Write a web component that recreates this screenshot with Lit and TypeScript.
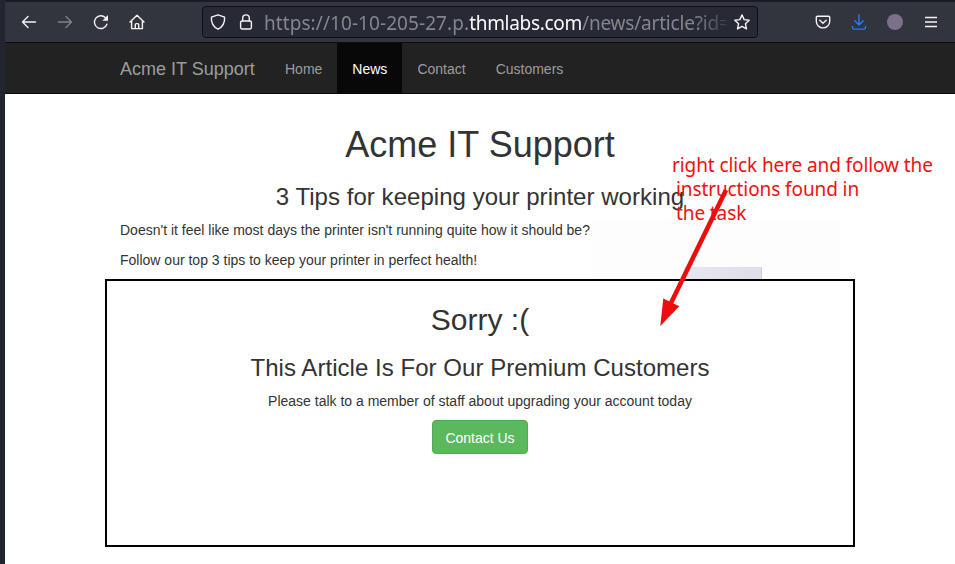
import { LitElement, html, css, svg } from "lit";
import { customElement } from "lit/decorators.js";
import { classMap } from "lit/directives/class-map.js";

@customElement("browser-toolbar")
class BrowserToolbar extends LitElement {
  static styles = css`
    :host { display: flex; align-items: center; height: 43px; box-sizing: border-box;
      background: #33353e; border-top: 2px solid #1a1b24; border-bottom: 1px solid #0c0c11;
      padding: 0 16px; color: #f3f3f5; }
    svg { display: block; width: 16px; height: 16px; fill: none; stroke: currentColor;
      stroke-width: 1.4; stroke-linecap: round; stroke-linejoin: round; flex: none; }
    .nav { display: flex; gap: 20px; width: 181px; flex: none; }
    .dim { color: #808188; }
    .bar { display: flex; align-items: center; width: 556px; height: 32px; box-sizing: border-box; flex: none;
      background: #272934; border: 1px solid #0e0f16; border-radius: 4px; padding: 0 7px; }
    .bar svg + svg { margin-left: 12px; }
    .url { flex: none; width: 463px; margin: 1px 7px 0 10px; white-space: nowrap;
      font: 19px/30px "Noto Sans", sans-serif; color: #85868b; letter-spacing: 0.07px;
      -webkit-mask-image: linear-gradient(to right, #000 430px, transparent 470px);
      mask-image: linear-gradient(to right, #000 430px, transparent 470px); }
    .host { color: #fbfbfe; letter-spacing: -0.3px; }
    .path { letter-spacing: -0.2px; }
    .tools { display: flex; align-items: center; gap: 20px; margin-left: 57px; }
    .blue { color: #2579ff; }
    .avatar { width: 16px; height: 16px; border-radius: 50%; background: #7c718b; flex: none; }
  `;
  render() {
    return html`
      <div class="nav">
        <svg viewBox="0 0 16 16"><path d="M14.5 8H1.5M7 2.5 1.5 8 7 13.5" /></svg>
        <svg class="dim" viewBox="0 0 16 16"><path d="M1.5 8h13M9 2.5 14.5 8 9 13.5" /></svg>
        <svg viewBox="0 0 16 16"><path d="M13.9 10.2A6.400 6.400 0 1 1 12.3 3.500" /><path fill="currentColor" stroke="none" d="M15 1v5.200a.5.5 0 0 1-.5.5H9.300z" /></svg>
        <svg viewBox="0 0 16 16"><path d="M1 8 8 1.200 15 8M2.600 6.800v7.800h10.800V6.800M6.300 14.400v-3.800a1 1 0 0 1 1-1h1.400a1 1 0 0 1 1 1v3.800" /></svg>
      </div>
      <div class="bar">
        <svg viewBox="0 0 16 16"><path d="M8 .8 14.600 3.200c.3 4.800-1.300 9.300-6.600 12C2.700 12.500 1.100 8 1.400 3.200z" /></svg>
        <svg viewBox="0 0 16 16"><rect x="2.600" y="7" width="10.800" height="8" rx="1.400" /><path d="M4.700 7V4.200a3.300 3.300 0 0 1 6.600 0V7" /></svg>
        <div class="url">https://10-10-205-27.p.<span class="host">thmlabs.com</span><span class="path">/news/article?id=</span></div>
        <svg viewBox="0 0 16 16"><path d="M8 .9 10.100 5.600 15.200 6.200 11.400 9.700 12.500 14.900 8 12.300 3.500 14.900 4.600 9.700.8 6.200 5.900 5.600z" /></svg>
      </div>
      <div class="tools">
        <svg viewBox="0 0 16 16"><path d="M2.500 2.200h11a1.200 1.200 0 0 1 1.200 1.200v3.800a6.700 6.700 0 0 1-13.400 0V3.400a1.200 1.200 0 0 1 1.200-1.200zM4.800 6.300 8 9.300l3.200-3" /></svg>
        <svg class="blue" viewBox="0 0 16 16"><path d="M8 .8v10M3.800 6.800 8 11l4.200-4.200M1.500 12.500v1a1.600 1.600 0 0 0 1.600 1.600h9.800a1.600 1.600 0 0 0 1.600-1.600v-1" /></svg>
        <div class="avatar"></div>
        <svg viewBox="0 0 16 16"><path stroke-linecap="butt" d="M2 3.500h12M2 8h12M2 12.500h12" /></svg>
      </div>`;
  }
}

@customElement("site-nav")
class SiteNav extends LitElement {
  static styles = css`
    :host { display: flex; height: 51px; box-sizing: border-box; padding-left: 115px;
      background: #222; border-bottom: 1px solid #080808; color: #9d9d9d;
      font: 14px/20px "Liberation Sans", sans-serif; }
    .brand { font-size: 18px; width: 150px; padding: 16px 0 14px; box-sizing: border-box; white-space: nowrap; }
    .item { padding: 16px 15px 14px; }
    .active { background: #080808; color: #fff; }
  `;
  render() {
    return html`<div class="brand">Acme IT Support</div>
      ${["Home", "News", "Contact", "Customers"].map(
        (t) => html`<div class=${classMap({ item: true, active: t === "News" })}>${t}</div>`
      )}`;
  }
}

@customElement("app-root")
class AppRoot extends LitElement {
  static styles = css`
    :host { display: block; position: relative; width: 955px; height: 564px; overflow: hidden; box-sizing: border-box;
      background: #fff; border-left: 5px solid #222430; color: #333;
      font: 14px/20px "Liberation Sans", sans-serif; }
    .edge { position: absolute; left: -5px; top: 0; width: 1px; height: 564px; background: #12131a; }
    .page { width: 750px; margin: 0 100px; padding-top: 31px; }
    h1, h2, h3, p { margin: 0; font-weight: 400; white-space: nowrap; }
    h1 { font-size: 36px; line-height: 40px; text-align: center; }
    h2 { font-size: 30px; line-height: 34px; text-align: center; }
    h3 { font-size: 24px; line-height: 26px; text-align: center; letter-spacing: 0.04px; }
    .page > h3 { margin: 19px 0 10px; }
    .intro { display: flex; justify-content: space-between; height: 59px; padding: 0 15px; }
    .intro p { margin-bottom: 10px; }
    .photo { width: 250px; height: 59px; background: #fdfdfd; display: flex; align-items: flex-end; padding-left: 94px; box-sizing: border-box; }
    .printer { width: 78px; height: 12px; background: linear-gradient(to right, #e8e6ef, #dfdde9); border-right: 1px solid #d0cddc; box-sizing: border-box; }
    .premium { border: 2px solid #000; height: 268px; box-sizing: border-box; display: flex; flex-direction: column; align-items: center; padding-top: 22px; background: #fff; }
    .premium h3 { margin: 18px 0 10px; }
    .button { margin-top: 9px; width: 96px; height: 34px; box-sizing: border-box; border: 1px solid #4cae4c; border-radius: 4px;
      background: #5cb85c; color: #fff; text-align: center; line-height: 34px; }
    .note { position: absolute; left: 667px; top: 153px; color: #ef1010; font: 19px/24px "Noto Sans", sans-serif; letter-spacing: -0.1px; white-space: nowrap; }
    .note .in { padding-left: 4px; }
    .arrow { position: absolute; left: 645px; top: 180px; width: 90px; height: 150px; }
  `;
  render() {
    return html`
      <browser-toolbar></browser-toolbar>
      <site-nav></site-nav>
      <div class="page">
        <h1>Acme IT Support</h1>
        <h3>3 Tips for keeping your printer working</h3>
        <div class="intro">
          <div>
            <p>Doesn't it feel like most days the printer isn't running quite how it should be?</p>
            <p>Follow our top 3 tips to keep your printer in perfect health!</p>
          </div>
          <div class="photo"><div class="printer"></div></div>
        </div>
        <div class="premium">
          <h2>Sorry :(</h2>
          <h3>This Article Is For Our Premium Customers</h3>
          <p>Please talk to a member of staff about upgrading your account today</p>
          <div class="button">Contact Us</div>
        </div>
      </div>
      <div class="note">
        <div>right click here and follow the</div>
        <div class="in">instructions found in</div>
        <div class="in">the task</div>
      </div>
      <svg class="arrow" viewBox="650 180 90 150">${svg`<path d="M726 190 671 303" stroke="#ee0d0d" stroke-width="4.600" fill="none"/><path d="M660.300 326 663.300 298.500 679.300 306.300z" fill="#ee0d0d"/>`}</svg>
      <div class="edge"></div>`;
  }
}
